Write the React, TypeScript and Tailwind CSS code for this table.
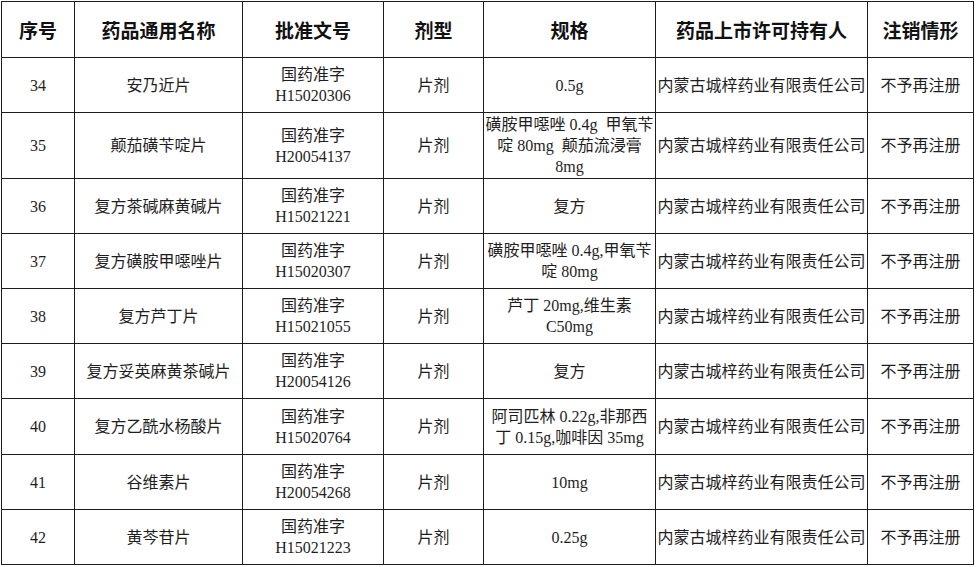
// 药品注销公告表格 — 第 34–42 项

const HEADERS = ["序号", "药品通用名称", "批准文号", "剂型", "规格", "药品上市许可持有人", "注销情形"];

type Row = {
  no: string;
  name: string;
  approval: string;
  spec: string[];
  tall?: boolean;
};

const HOLDER = "内蒙古城梓药业有限责任公司";

const ROWS: Row[] = [
  { no: "34", name: "安乃近片", approval: "H15020306", spec: ["0.5g"] },
  {
    no: "35",
    name: "颠茄磺苄啶片",
    approval: "H20054137",
    spec: ["磺胺甲噁唑 0.4g  甲氧苄", "啶 80mg  颠茄流浸膏", "8mg"],
    tall: true,
  },
  { no: "36", name: "复方茶碱麻黄碱片", approval: "H15021221", spec: ["复方"] },
  { no: "37", name: "复方磺胺甲噁唑片", approval: "H15020307", spec: ["磺胺甲噁唑 0.4g,甲氧苄", "啶 80mg"] },
  { no: "38", name: "复方芦丁片", approval: "H15021055", spec: ["芦丁 20mg,维生素", "C50mg"] },
  { no: "39", name: "复方妥英麻黄茶碱片", approval: "H20054126", spec: ["复方"] },
  { no: "40", name: "复方乙酰水杨酸片", approval: "H15020764", spec: ["阿司匹林 0.22g,非那西", "丁 0.15g,咖啡因 35mg"] },
  { no: "41", name: "谷维素片", approval: "H20054268", spec: ["10mg"] },
  { no: "42", name: "黄芩苷片", approval: "H15021223", spec: ["0.25g"] },
];

const cell =
  "border-r border-b border-[#1c1c1c] flex flex-col items-center justify-center text-center";

export default function App() {
  return (
    <div className="w-[977px] h-[567px] bg-white overflow-hidden pt-px pl-px">
      <div
        className="w-fit grid grid-cols-[73px_168px_141px_100px_172px_212px_106px] border-l border-t border-[#1c1c1c] text-[#1e1e1e] text-[16px] leading-[21px]"
        style={{ fontFamily: '"Liberation Serif", "Noto Sans CJK SC", serif' }}
      >
        {/* header */}
        {HEADERS.map((h) => (
          <div
            key={h}
            className={`${cell} h-[56px] text-[19px] font-bold text-[#111]`}
            style={{ fontFamily: '"Noto Sans CJK SC", sans-serif' }}
          >
            {h}
          </div>
        ))}

        {ROWS.map((r, i) => {
          const h = r.tall ? "h-[66px]" : i === 6 ? "h-[56px]" : "h-[55px]";
          return (
            <div key={r.no} className="contents">
              <div className={`${cell} ${h}`}>{r.no}</div>
              <div className={`${cell} ${h}`}>{r.name}</div>
              <div className={`${cell} ${h}`}>
                <span>国药准字</span>
                <span>{r.approval}</span>
              </div>
              <div className={`${cell} ${h}`}>片剂</div>
              <div className={`${cell} ${h}`}>
                {r.spec.map((s, k) => (
                  <span key={k} className="whitespace-pre">
                    {s}
                  </span>
                ))}
              </div>
              <div className={`${cell} ${h} whitespace-nowrap`}>{HOLDER}</div>
              <div className={`${cell} ${h}`}>不予再注册</div>
            </div>
          );
        })}
      </div>
    </div>
  );
}
